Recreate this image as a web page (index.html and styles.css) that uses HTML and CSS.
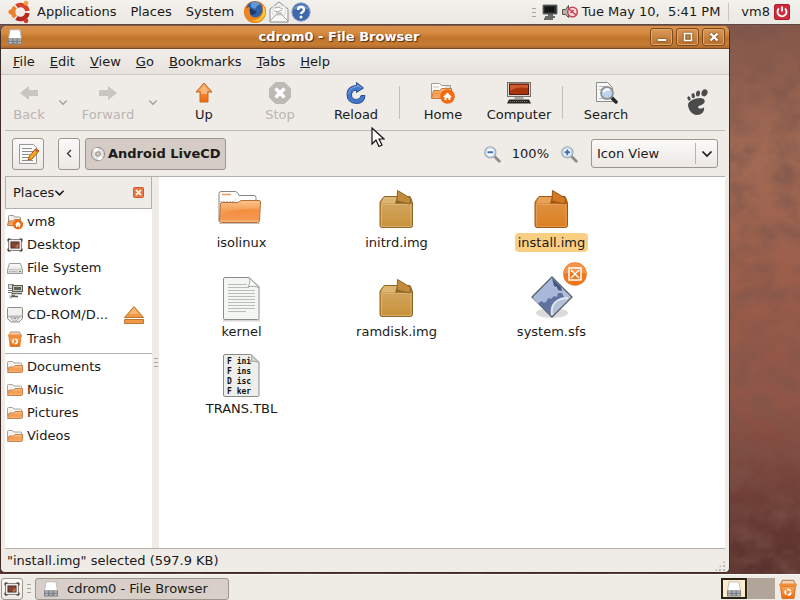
FILE: index.html
```html
<!DOCTYPE html>
<html lang="en">

<head>
    <meta charset="UTF-8">
    <meta name="viewport" content="width=device-width, initial-scale=1.0">
    <title>cdrom0 - File Browser</title>
    <link rel="stylesheet" href="styles.css">
</head>

<body>
    <!-- Shared icons -->
    <svg class="sprite" width="0" height="0" aria-hidden="true">
        <defs>
            <linearGradient id="orange" x1="0" y1="0" x2="0" y2="1">
                <stop offset="0" stop-color="#fcc48c" />
                <stop offset="0.5" stop-color="#f59a4e" />
                <stop offset="1" stop-color="#f9b070" />
            </linearGradient>
            <linearGradient id="hot" x1="0" y1="0" x2="0" y2="1">
                <stop offset="0" stop-color="#f9a45c" />
                <stop offset="1" stop-color="#ee6a0a" />
            </linearGradient>
            <linearGradient id="grey" x1="0" y1="0" x2="0" y2="1">
                <stop offset="0" stop-color="#fdfdfd" />
                <stop offset="1" stop-color="#d4d6d2" />
            </linearGradient>
            <linearGradient id="steel" x1="0" y1="0" x2="1" y2="1">
                <stop offset="0" stop-color="#93a5c8" />
                <stop offset="1" stop-color="#c3cde0" />
            </linearGradient>
            <linearGradient id="fade" x1="0" y1="0" x2="0" y2="1">
                <stop offset="0" stop-color="#fff" stop-opacity="0.15" />
                <stop offset="1" stop-color="#fff" stop-opacity="0" />
            </linearGradient>
        </defs>
        <symbol id="folder" viewBox="0 0 16 16">
            <path d="M.500 11.500v-8q0-1 1-1h4l1.500 1.500h6.500q1 0 1 1v2.500" fill="#f7f4f0" stroke="#a8a199" />
            <path d="M.500 13.500l1.500-5.500h4.500l1.500-1.500h7.500v6q0 1-1 1z" fill="url(#orange)" stroke="#c58552" />
        </symbol>
        <symbol id="home-folder" viewBox="0 0 16 16">
            <path d="M1.500 11.500v-9q0-1 1-1h4l1 1.500h5q1 0 1 1v2" fill="#f4f1ed" stroke="#99938b" />
            <path d="M.500 11.500l1-4.500h4l2-1.500h5.500v6z" fill="url(#orange)" stroke="#c67b41" />
            <circle cx="11" cy="10.500" r="5" fill="#ee6a14" />
            <path d="M11 7.500l3 3h-1v2.500h-1.500v-1.500h-1v1.500H9v-2.500H8z" fill="#fff" />
        </symbol>
        <symbol id="desktop" viewBox="0 0 16 16">
            <rect x="1.500" y="2.500" width="13" height="11" fill="#ece9e6" stroke="#8f8780" />
            <rect x="4" y="5" width="8" height="6" fill="#8c4330" stroke="#42302b" />
            <path d="M8 10.500l3.500-4v4z" fill="#bd7b5f" />
            <path d="M1 4.500V2h2.500M12.500 2H15v2.500M15 11.500V14h-2.500M3.500 14H1v-2.500" fill="none" stroke="#2d2623" />
        </symbol>
        <symbol id="drive" viewBox="0 0 16 16">
            <path d="M2.500 3.500h11l2 6v4H.500v-4z" fill="url(#grey)" stroke="#9c9e9a" />
            <path d="M1 9.500h14" stroke="#c6c6c4" />
            <path d="M2.500 11.500h8" stroke="#8f938d" stroke-dasharray="1 1" />
            <path d="M12 11.500h2" stroke="#6a9a3a" />
        </symbol>
        <symbol id="network" viewBox="0 0 16 16">
            <rect x="1.500" y="1.500" width="5" height="4" fill="#ddd" stroke="#8b8982" />
            <path d="M1 7.500h6M1 9.500h4v3h3" fill="none" stroke="#77756f" />
            <rect x="5.500" y="2.500" width="10" height="6" fill="#c9c6be" stroke="#5d5a55" />
            <path d="M7 4h7v3H7z" fill="#58654f" />
            <path d="M5 10.500h10M4 13.500h7" stroke="#5a5752" stroke-width="1.500" />
            <path d="M10 9v2M3 12v3h2" stroke="#aaa" fill="none" />
        </symbol>
        <symbol id="cdrom" viewBox="0 0 16 16">
            <path d="M1.500.500h13q1 0 1 1v10l-3.500 3.500H4L.500 11.500v-10q0-1 1-1z" fill="#f0f0ef" stroke="#8b8b88" />
            <path d="M1 8h14v3H1z" fill="#d3d4d2" />
            <path d="M2.500 9.500h11" stroke="#9c9d9b" stroke-dasharray="1 1" />
            <path d="M4 11h8l-2.500 3h-3z" fill="#eef4ec" stroke="#a8aba7" />
            <circle cx="8" cy="11.500" r="1" fill="#999" />
        </symbol>
        <symbol id="tray" viewBox="0 0 16 16">
            <path d="M3 .800h10l1.500 9H1.500z" fill="#fff" stroke="#b1b1b1" stroke-width=".800" />
            <path d="M1 9.500h14v6H1z" fill="#7c8186" />
            <path d="M2 11h3M6.500 11h3M11 11h3M2 13.800h3M11 13.800h3" stroke="#d4d7da" />
            <path d="M6.500 13.800h3" stroke="#b7bbc0" />
        </symbol>
        <symbol id="trash" viewBox="0 0 16 16">
            <path d="M2 4.500L3.500 1h9L14 4.500z" fill="#f8d2b0" stroke="#b98f70" />
            <path d="M2 6h12l-1.200 9.500H3.200z" fill="url(#hot)" stroke="#d86a18" stroke-width=".700" />
            <rect x="1" y="3.500" width="14" height="2.500" rx="1" fill="#f28b3c" />
            <circle cx="8" cy="10.500" r="2.200" fill="none" stroke="#fff" stroke-width="1.500" stroke-dasharray="3.600 1" />
        </symbol>
        <symbol id="box" viewBox="0 0 48 46">
            <path class="box-body" d="M11 9.500h26l2.500 6v23q0 2-2 2H9q-2 0-2-2V15z" />
            <path class="box-dark" d="M22 15.500l2-5h12l3 6H22z" />
            <path class="box-pale" d="M11 10h13l-2 6.500H8z" />
            <path d="M8.500 17.500H38v21q0 1-1 1H9.500q-1 0-1-1z" fill="url(#fade)" stroke="#fff" stroke-opacity=".25" />
            <path class="box-flap" d="M24.500 3.500L38 11.500l-1.500 5.500L24 14z" />
        </symbol>
        <symbol id="lens" viewBox="0 0 16 16">
            <path d="M10.500 10.500l4 4" stroke="#8c8c8a" stroke-width="2.500" stroke-linecap="round" />
            <circle cx="6.500" cy="6.500" r="5" fill="#e3ecf7" stroke="#9ca5af" />
            <circle cx="6.500" cy="6.500" r="3.900" fill="#fff" stroke="#b9cde6" />
        </symbol>
        <symbol id="down" viewBox="0 0 12 8">
            <path d="M1.500 1.500L6 6l4.500-4.500" fill="none" stroke="currentColor" stroke-width="1.700" />
        </symbol>
    </svg>

    <header class="panel top-panel">
        <nav class="panel-menus">
            <svg class="logo" viewBox="0 0 24 24" aria-hidden="true">
                <g fill="none" stroke-width="4.500">
                    <path d="M8.500 6.200A7 7 0 0 1 19.400 11" stroke="#d8402a" />
                    <path d="M19.400 13A7 7 0 0 1 8.500 17.800" stroke="#b5291f" />
                    <path d="M7.200 17A7 7 0 0 1 7.200 7" stroke="#f08330" />
                </g>
                <circle cx="2.800" cy="12" r="2.400" fill="#ef7f2d" />
                <circle cx="18" cy="3.200" r="2.400" fill="#f3a13f" />
                <circle cx="18" cy="20.800" r="2.400" fill="#d0382a" />
            </svg>
            <button class="panel-menu">Applications</button>
            <button class="panel-menu">Places</button>
            <button class="panel-menu">System</button>
        </nav>
        <div class="launchers">
            <button class="launcher" aria-label="Firefox">
                <svg width="24" height="24" viewBox="0 0 24 24">
                    <circle cx="12" cy="12" r="11" fill="#e8701a" />
                    <circle cx="11.500" cy="9.500" r="8" fill="#2d63ad" />
                    <path d="M8 3q5-3 9 1l-3 2-2 3-4-2z" fill="#5f9ad4" />
                    <path d="M2 6Q0 15 5 20q7 6 15-1 4-5 2-12-1 8-6 10-7 2-9-3l4-1 3-2-4-1q-3 0-4-3Q2 10 2 6z" fill="#ee861f" />
                    <path d="M20 5q5 9-1 14-5 4-10 2 9-1 11-9z" fill="#f9ce3c" />
                    <path d="M7 8l3 2 4 1-2 3-4 1q-2-3-1-7z" fill="#1b3668" />
                </svg>
            </button>
            <button class="launcher" aria-label="Mail">
                <svg width="20" height="22" viewBox="0 0 20 22">
                    <path d="M1 8l9-7 9 7v13H1z" fill="#f7f7f5" stroke="#8c8c8a" />
                    <path d="M4 5h12v9H4z" fill="#fff" stroke="#d8d8d5" />
                    <path d="M5 7q5-2 9 1M5 10q4 2 8-1M7 12h6" fill="none" stroke="#a9a9a5" />
                    <path d="M1 20l7-7h4l7 7" fill="none" stroke="#a5a5a2" />
                </svg>
            </button>
            <button class="launcher" aria-label="Help">
                <svg width="20" height="20" viewBox="0 0 20 20">
                    <circle cx="10" cy="10" r="9.200" fill="#3e68ac" stroke="#8fa8d0" />
                    <path d="M3 7q7-7 14 0" fill="none" stroke="#6f93cb" stroke-width="2" />
                    <path d="M7 8q0-3 3-3t3 2.500q0 1.500-1.500 2.500T10 12" fill="none" stroke="#fff" stroke-width="2.400" />
                    <circle cx="10" cy="15" r="1.500" fill="#fff" />
                </svg>
            </button>
        </div>
        <div class="tray">
            <span class="grip"></span>
            <svg width="16" height="16" viewBox="0 0 16 16" aria-hidden="true">
                <path d="M1 1h14v9H1z" fill="#282c2b" stroke="#777" />
                <path d="M3 3h9v5H3z" fill="#111614" />
                <path d="M3 13h10M6 11h5M2 15h9" stroke="#3d403f" stroke-width="1.500" />
            </svg>
            <svg class="sound" width="16" height="16" viewBox="0 0 16 16" aria-hidden="true">
                <path d="M.500 5.500h3l3-4v12l-3-3h-3z" fill="#b5b0ae" stroke="#57504d" />
                <circle cx="10.500" cy="8" r="4.800" fill="#f4dcdf" stroke="#c84355" stroke-width="1.500" />
                <path d="M7 5l7 6M8.500 9l3-3" stroke="#c84355" stroke-width="1.500" />
            </svg>
            <time class="clock">Tue May 10,  5:41 PM</time>
            <button class="user">vm8
                <svg width="16" height="16" viewBox="0 0 16 16" aria-hidden="true">
                    <rect x=".500" y=".500" width="15" height="15" rx="1.500" fill="#cf2b3d" stroke="#a91d2e" />
                    <path d="M5 4.500a4.500 4.500 0 1 0 6 0M8 2.500v5" fill="none" stroke="#fff" stroke-width="1.800" />
                </svg>
            </button>
        </div>
    </header>

    <main class="desktop">
        <svg class="wallpaper" aria-hidden="true">
            <filter id="grain" x="0" y="0" width="100%" height="100%">
                <feTurbulence type="fractalNoise" baseFrequency="0.040 0.050" numOctaves="6" seed="8" />
                <feColorMatrix values="0 0 0 0 0.200  0 0 0 0 0.090  0 0 0 0 0.070  1.300 0 0 0 -0.450" />
            </filter>
            <rect width="100%" height="100%" filter="url(#grain)" />
        </svg>

        <section class="window">
            <div class="titlebar">
                <svg width="16" height="16"><use href="#tray" /></svg>
                <h1>cdrom0 - File Browser</h1>
                <div class="window-buttons">
                    <button aria-label="Minimize"><svg viewBox="0 0 12 12"><path d="M2 9h8" stroke-width="2" /></svg></button>
                    <button aria-label="Maximize"><svg viewBox="0 0 12 12"><path d="M2.500 2.500h7v7h-7z" stroke-width="1.500" /></svg></button>
                    <button aria-label="Close"><svg viewBox="0 0 12 12"><path d="M2.500 2.500l7 7M9.500 2.500l-7 7" stroke-width="2.400" /></svg></button>
                </div>
            </div>

            <nav class="menubar">
                <button><u>F</u>ile</button>
                <button><u>E</u>dit</button>
                <button><u>V</u>iew</button>
                <button><u>G</u>o</button>
                <button><u>B</u>ookmarks</button>
                <button><u>T</u>abs</button>
                <button><u>H</u>elp</button>
            </nav>

            <div class="toolbar">
                <button class="tool back" disabled>
                    <svg width="24" height="24" viewBox="0 0 24 24"><path d="M3 12l9-7v4h9v6h-9v4z" fill="#c9c5c0" /></svg>
                    Back
                </button>
                <button class="history" aria-label="Back history" disabled><svg width="10" height="7"><use href="#down" /></svg></button>
                <button class="tool forward" disabled>
                    <svg width="24" height="24" viewBox="0 0 24 24"><path d="M21 12l-9-7v4H3v6h9v4z" fill="#c9c5c0" /></svg>
                    Forward
                </button>
                <button class="history" aria-label="Forward history" disabled><svg width="10" height="7"><use href="#down" /></svg></button>
                <button class="tool up">
                    <svg width="24" height="24" viewBox="0 0 24 24"><path d="M12 2l8 9h-4v10H8V11H4z" fill="url(#hot)" stroke="#c66a24" /><path d="M12 4l5 6h-2v3H9v-3H7z" fill="#fcc795" opacity=".700" /></svg>
                    Up
                </button>
                <button class="tool" disabled>
                    <svg width="24" height="24" viewBox="0 0 24 24"><path d="M7.500 1h9L23 7.500v9L16.500 23h-9L1 16.500v-9z" fill="#bdbab6" /><path d="M7.500 7.500l9 9M16.500 7.500l-9 9" stroke="#fff" stroke-width="3.500" /></svg>
                    Stop
                </button>
                <button class="tool">
                    <svg width="24" height="24" viewBox="0 0 24 24">
                        <path d="M12.500 1.500l7 5.500-7 4.500V9q-5 .500-5 5 0 4.500 5 4.500 4 0 4.500-4h4q-.500 8-8.500 8-9.500-.500-9.500-9Q3 5 12.500 4.500z" fill="#4478cc" stroke="#284c8c" />
                        <path d="M4.500 13q.500-7 9-7.500V4l3.500 3" fill="none" stroke="#7da6e6" />
                    </svg>
                    Reload
                </button>
                <span class="separator"></span>
                <button class="tool">
                    <svg width="24" height="24" viewBox="0 0 24 24">
                        <path d="M.500 17V2.500h8l2 2h9V9" fill="#fbfaf8" stroke="#a09b94" />
                        <path d="M2 6h6M14 6h5" stroke="#c9c4bd" />
                        <path d="M.500 17.500l2-8h6l2-2h10v10z" fill="url(#orange)" stroke="#c67b41" />
                        <circle cx="16.500" cy="15.500" r="7.300" fill="#f26d12" />
                        <path d="M16.500 11.500l4.500 4.500h-1.500v3h-2v-2h-2v2h-2v-3H12z" fill="#fff" />
                    </svg>
                    Home
                </button>
                <button class="tool">
                    <svg width="26" height="24" viewBox="0 0 26 24">
                        <rect x="1.500" y="1.500" width="23" height="14" fill="#ddd9d4" stroke="#77716b" />
                        <rect x="3.500" y="3" width="19" height="10.500" fill="#a8330f" stroke="#4e1c10" />
                        <path d="M4 10q6-5 18-3V4H4z" fill="#cc5a2b" />
                        <path d="M9 16h8l1 2H8z" fill="#a9a7a4" />
                        <path d="M3 18.500h20l2 4H1z" fill="#292726" />
                        <path d="M4 20.500h18" stroke="#77716b" stroke-dasharray="1 1" />
                    </svg>
                    Computer
                </button>
                <span class="separator"></span>
                <button class="tool">
                    <svg width="24" height="24" viewBox="0 0 24 24">
                        <path d="M2.500 1.500h11l5 5v14h-16z" fill="#f7f7f6" stroke="#8c8c8a" />
                        <path d="M5 5.500h7M5 8.500h4M5 17.500h8" stroke="#bbb" />
                        <path d="M17 16l5 5" stroke="#282828" stroke-width="3.500" stroke-linecap="round" />
                        <circle cx="13" cy="12" r="6" fill="#bdd5ee" stroke="#8f9499" stroke-width="1.800" />
                        <path d="M9.500 11q2-4 6-2" fill="none" stroke="#fff" stroke-width="2" />
                    </svg>
                    Search
                </button>
                <svg class="foot" viewBox="0 0 22 27" aria-hidden="true">
                    <ellipse cx="18.500" cy="3.800" rx="2.900" ry="3.600" transform="rotate(25 18.500 3.800)" />
                    <ellipse cx="12" cy="4.500" rx="2" ry="3" transform="rotate(8 12 4.500)" />
                    <ellipse cx="7.200" cy="6.700" rx="1.700" ry="2.600" transform="rotate(-8 7.200 6.700)" />
                    <ellipse cx="3" cy="9.500" rx="1.500" ry="2.200" transform="rotate(-22 3 9.500)" />
                    <path d="M14 9c5 0 6 4 3 6-2 2-4 1-5 3 0 2 5 2 6 0 1 5-3 8-7 8-6 0-9-7-9-10 0-4 7-7 12-7z" />
                </svg>
            </div>

            <div class="locationbar">
                <button class="push edit" aria-label="Edit location">
                    <svg width="24" height="24" viewBox="0 0 24 24">
                        <path d="M3.500 2.500h14l3 3v16h-17z" fill="#fafafa" stroke="#999995" />
                        <path d="M6 6.500h10M6 9.500h11M6 12.500h8M6 15.500h8M6 18.500h11" stroke="#8b8f8b" />
                        <path d="M12 18l1.500-4L20 6.500l3 2.500-7 8z" fill="#f5a623" stroke="#a55d14" />
                        <path d="M20 6.500l3 2.500-1.500 1.500-3-2.500z" fill="#d95b43" />
                    </svg>
                </button>
                <button class="push previous" aria-label="Previous folder">
                    <svg width="6" height="9" viewBox="0 0 6 9"><path d="M5 1L1.500 4.500 5 8" fill="none" stroke="#333" stroke-width="1.300" /></svg>
                </button>
                <button class="push crumb">
                    <svg width="16" height="16" viewBox="0 0 16 16" aria-hidden="true">
                        <circle cx="8" cy="8" r="6.500" fill="#e6e3e0" stroke="#8c8884" />
                        <path d="M8 8L3 4q3-3 5-2zM8 8l5 4q-3 3-5 2z" fill="#fff" />
                        <circle cx="8" cy="8" r="2.300" fill="#d4ccc7" stroke="#928c88" />
                    </svg>
                    Android LiveCD
                </button>
                <div class="zoom">
                    <button aria-label="Zoom out"><svg width="18" height="18" viewBox="0 0 16 16"><use href="#lens" /><path d="M4 6.500h5" stroke="#3f6fb5" stroke-width="1.800" /></svg></button>
                    <span>100%</span>
                    <button aria-label="Zoom in"><svg width="18" height="18" viewBox="0 0 16 16"><use href="#lens" /><path d="M4 6.500h5M6.500 4v5" stroke="#3f6fb5" stroke-width="1.800" /></svg></button>
                </div>
                <div class="view-select">
                    <select aria-label="View">
                        <option>Icon View</option>
                        <option>List View</option>
                        <option>Compact View</option>
                    </select>
                    <span class="view-arrow"><svg width="12" height="8"><use href="#down" /></svg></span>
                </div>
            </div>

            <div class="content">
                <aside class="sidebar">
                    <div class="sidebar-header">
                        <button class="sidebar-title">Places <svg width="11" height="8"><use href="#down" /></svg></button>
                        <button class="sidebar-close" aria-label="Close side pane">
                            <svg width="11" height="11" viewBox="0 0 11 11"><rect x=".500" y=".500" width="10" height="10" rx="1" fill="#ea7a45" stroke="#d05a28" /><path d="M3 3l5 5M8 3L3 8" stroke="#fff" stroke-width="1.700" /></svg>
                        </button>
                    </div>
                    <ul class="places">
                        <li><a href="#"><svg><use href="#home-folder" /></svg>vm8</a></li>
                        <li><a href="#"><svg><use href="#desktop" /></svg>Desktop</a></li>
                        <li><a href="#"><svg><use href="#drive" /></svg>File System</a></li>
                        <li><a href="#"><svg><use href="#network" /></svg>Network</a></li>
                        <li class="removable">
                            <a href="#"><svg><use href="#cdrom" /></svg>CD-ROM/D...</a>
                            <button class="eject" aria-label="Eject">
                                <svg width="22" height="20" viewBox="0 0 22 20"><path d="M11 1.500l9.500 11h-19zM1.500 14.500h19v4h-19z" fill="#f19a44" stroke="#bd7532" /><path d="M11 3l5 6H6z" fill="#f8b878" /></svg>
                            </button>
                        </li>
                        <li><a href="#"><svg><use href="#trash" /></svg>Trash</a></li>
                    </ul>
                    <ul class="places bookmarks">
                        <li><a href="#"><svg><use href="#folder" /></svg>Documents</a></li>
                        <li><a href="#"><svg><use href="#folder" /></svg>Music</a></li>
                        <li><a href="#"><svg><use href="#folder" /></svg>Pictures</a></li>
                        <li><a href="#"><svg><use href="#folder" /></svg>Videos</a></li>
                    </ul>
                </aside>
                <div class="splitter"><span class="grip"></span></div>
                <div class="files">
                    <a class="file" href="#">
                        <svg viewBox="0 0 48 46">
                            <path d="M1 34.500V6.500q0-2 2-2h14q2 0 3 2l1 2h15q2 0 2 2v7" fill="#fff" stroke="#8d867e" />
                            <path d="M4 7.500h9" stroke="#ee9a5a" stroke-width="1.500" />
                            <path d="M2 14.500h14l2-2" fill="none" stroke="#c5bfb8" stroke-dasharray="2 1" />
                            <path d="M2.500 17q0-1.500 1.500-1.500h15q2 0 4-2h18q1.500 0 1.500 1.500l-1 18.500q0 2-2 2h-36q-2 0-2-2z" fill="url(#orange)" stroke="#b5703c" />
                            <path d="M2.500 28q17-8 39-6l-.500 11H2z" fill="#f08238" opacity=".450" />
                            <path d="M1 36.500h41" stroke="#8f8780" opacity=".500" />
                        </svg>
                        <span>isolinux</span>
                    </a>
                    <a class="file" href="#">
                        <svg><use href="#box" /></svg>
                        <span>initrd.img</span>
                    </a>
                    <a class="file selected" href="#">
                        <svg><use href="#box" /></svg>
                        <span>install.img</span>
                    </a>
                    <a class="file" href="#">
                        <svg viewBox="0 0 48 46">
                            <path d="M5 44.500h37" stroke="#bbb" stroke-width="2" opacity=".600" />
                            <path d="M5.500 3q0-1.500 1.500-1.500h24l10 9V42q0 1.500-1.500 1.500H7q-1.500 0-1.500-1.500z" fill="#f4f6f4" stroke="#8a8c8a" />
                            <path d="M10 8.500h19M10 11.500h21M10 14.500h27M10 17.500h27M10 20.500h27M10 23.500h27M10 26.500h27M10 29.500h27M10 32.500h27M10 35.500h18" stroke="#b7beba" />
                            <path d="M31 1.500q2 6-1 9 6-1 11 1z" fill="#fff" stroke="#a5a8a5" />
                        </svg>
                        <span>kernel</span>
                    </a>
                    <a class="file" href="#">
                        <svg><use href="#box" /></svg>
                        <span>ramdisk.img</span>
                    </a>
                    <a class="file with-emblem" href="#">
                        <svg viewBox="0 0 48 46">
                            <ellipse cx="24" cy="37" rx="16" ry="5" fill="#999" opacity=".350" />
                            <path d="M24 1l20 20-20 20L4 21z" fill="url(#steel)" stroke="#59616f" stroke-width="1.300" />
                            <path d="M24 2l11 11-1 3-3 0 0 3-3-1-1 4-4-1-1 4-4-1-2 4-4-1-2 1-5-6z" fill="#a8b8d8" />
                            <path d="M24 2l9 9 1 4-4-1-1-3-3-1z" fill="#46577f" />
                            <path d="M10 27l4-2 2 2 3-2 1-3 3 1 3-3 3 1 1-4 4 0 2 4-4 1-2 4-4 1-2 5-1 7z" fill="#60739f" />
                            <path d="M24 39q-2-12 9-16l7-1" fill="none" stroke="#e0e6f2" stroke-width="2" />
                        </svg>
                        <svg class="emblem" viewBox="0 0 24 24">
                            <circle cx="12" cy="12" r="11.800" fill="#f1771c" />
                            <path d="M1 12a11 11 0 0 1 22 0q-11-4-22 0z" fill="#f6a260" opacity=".700" />
                            <path d="M6 6h12v12H6zM8 8l8 8M16 8l-8 8" fill="none" stroke="#fff" stroke-width="1.500" />
                        </svg>
                        <span>system.sfs</span>
                    </a>
                    <a class="file" href="#">
                        <svg viewBox="0 0 48 46">
                            <path d="M5.500 3q0-1.500 1.500-1.500h26l8 8V42q0 1.500-1.500 1.500H7q-1.500 0-1.500-1.500z" fill="#eeefec" stroke="#8a8c8a" />
                            <path d="M33 1.500q2 5-1 7 5-1 9 1z" fill="#cfd5cd" stroke="#a5a8a5" />
                            <g class="preview">
                                <text x="9" y="11">F ini</text>
                                <text x="9" y="21">F ins</text>
                                <text x="9" y="31">D isc</text>
                                <text x="9" y="41">F ker</text>
                            </g>
                        </svg>
                        <span>TRANS.TBL</span>
                    </a>
                </div>
            </div>

            <footer class="statusbar">
                <span>"install.img" selected (597.9 KB)</span>
                <span class="resize"></span>
            </footer>
        </section>

        <svg class="pointer" viewBox="0 0 14 21" aria-hidden="true">
            <path d="M1 1v16l4-4 3 6.500 3-1.500-3-6h5z" fill="#fff" stroke="#111" stroke-width="1.200" />
        </svg>
    </main>

    <footer class="panel bottom-panel">
        <button class="push show-desktop" aria-label="Show desktop"><svg width="16" height="16"><use href="#desktop" /></svg></button>
        <span class="grip"></span>
        <button class="push task"><svg width="16" height="16"><use href="#tray" /></svg>cdrom0 - File Browser</button>
        <div class="workspaces">
            <button class="workspace current" aria-label="Workspace 1"><svg width="16" height="16"><use href="#tray" /></svg></button>
            <button class="workspace" aria-label="Workspace 2"></button>
        </div>
        <button class="trash" aria-label="Trash"><svg width="20" height="22"><use href="#trash" /></svg></button>
    </footer>
</body>

</html>
```
FILE: styles.css
```css
* {
    box-sizing: border-box;
}

body {
    margin: 0;
    height: 100vh;
    display: flex;
    flex-direction: column;
    font-family: "DejaVu Sans", sans-serif;
    font-size: 13px;
    line-height: 18px;
    color: #1a1a1a;
    background-color: #6e3c30;
    overflow: hidden;
}

button {
    font: inherit;
    color: inherit;
    background: none;
    border: none;
    padding: 0;
    white-space: nowrap;
}

button,
a,
select {
    cursor: default;
}

svg {
    display: block;
    flex-shrink: 0;
}

.sprite {
    position: absolute;
}

/* Panels */
.panel {
    display: flex;
    align-items: center;
    flex-shrink: 0;
    background-color: #efebe5;
}

.top-panel {
    height: 24px;
    padding: 0 10px 0 8px;
    background: linear-gradient(#f4f2ee, #ebe7e1);
}

.panel-menus {
    display: flex;
    align-items: center;
    gap: 14px;
}

.logo {
    width: 24px;
    height: 24px;
    margin-right: -9px;
}

.launchers {
    display: flex;
    align-items: center;
    gap: 2px;
    margin-left: 9px;
}

.tray {
    display: flex;
    align-items: center;
    margin-left: auto;
}

.grip {
    width: 4px;
    height: 9px;
    background: repeating-linear-gradient(#a9a49d 0 1px, transparent 1px 4px);
}

.tray .grip {
    margin-right: 6px;
}

.sound {
    margin-left: 4px;
}

.clock {
    margin-left: 4px;
    padding-right: 8px;
    white-space: pre;
    border-right: 1px solid #c9c4bd;
}

.user {
    display: flex;
    align-items: center;
    gap: 4px;
    margin-left: 12px;
}

/* Desktop */
.desktop {
    flex: 1;
    min-height: 0;
    display: flex;
    position: relative;
    padding: 1px 70px 1px 0;
    background: linear-gradient(#84574a, #a26a54 24%, #9b5e4a 45%, #8f5446 70%, #6b3c35 88%, #58302c);
    border-top: 1px solid #5c4a42;
}

.wallpaper {
    position: absolute;
    inset: 0;
    width: 100%;
    height: 100%;
}

.pointer {
    position: absolute;
    left: 371px;
    top: 102px;
    width: 14px;
    height: 21px;
}

/* Window */
.window {
    position: relative;
    flex: 1;
    min-width: 0;
    display: flex;
    flex-direction: column;
    background-color: #efebe7;
    border: 1px solid #3d2c25;
    border-top: none;
    border-radius: 6px 6px 5px 5px;
    overflow: hidden;
}

.titlebar {
    display: flex;
    align-items: center;
    height: 23px;
    padding: 0 4px 0 6px;
    background: linear-gradient(#d8924c, #d68b42 30%, #c0742c 55%, #c77b33 85%, #a9682f);
    border-bottom: 1px solid #7d4b1f;
}

.titlebar h1 {
    flex: 1;
    margin: 0;
    padding-left: 5px;
    text-align: center;
    font-size: 13px;
    font-weight: bold;
    color: #fff;
    text-shadow: 1px 1px 1px #4b2b10;
}

.window-buttons {
    display: flex;
    gap: 3px;
}

.window-buttons button {
    display: flex;
    align-items: center;
    justify-content: center;
    width: 23px;
    height: 18px;
    border: 1px solid #7f4a1a;
    border-radius: 3px;
    background: linear-gradient(#dc9a5b, #b9702b);
    box-shadow: inset 0 0 0 1px #e0a66c;
}

.window-buttons svg {
    width: 12px;
    height: 12px;
    fill: none;
    stroke: #fff;
    filter: drop-shadow(0 0 1px #4b2b10);
}

.menubar {
    display: flex;
    gap: 15px;
    padding: 4px 12px 3px;
    background: linear-gradient(#f1eeea, #e7e2dc);
    border-bottom: 1px solid #cbc6bf;
}

/* Toolbar */
.toolbar {
    display: flex;
    align-items: center;
    height: 56px;
    margin: 0 4px;
    border-bottom: 1px solid #bdb8b1;
}

.tool {
    display: flex;
    flex-direction: column;
    align-items: center;
    gap: 1px;
    width: 76px;
}

.tool.back {
    width: 48px;
}

.tool.forward {
    width: 70px;
}

.tool.up {
    margin-left: 3px;
}

.tool:disabled {
    color: #b9b5b0;
}

.history {
    display: flex;
    justify-content: center;
    width: 20px;
    color: #a5a19c;
}

.separator {
    width: 1px;
    height: 33px;
    margin: 0 5px;
    background-color: #c4bfb8;
}

.foot {
    width: 22px;
    height: 27px;
    margin-left: auto;
    margin-right: 17px;
    fill: #4b4b4b;
}

.locationbar {
    display: flex;
    align-items: center;
    height: 46px;
    padding: 0 7px;
    margin: 0 4px;
    border-bottom: 1px solid #b5b0a9;
}

.push {
    display: flex;
    align-items: center;
    justify-content: center;
    height: 32px;
    border: 1px solid #9c968f;
    border-radius: 3px;
    background: linear-gradient(#fbfaf9, #ece8e4);
}

.edit {
    width: 32px;
}

.previous {
    width: 22px;
    margin: 0 5px 0 14px;
}

.crumb {
    gap: 2px;
    padding: 0 4px;
    font-weight: bold;
    background: #d5ccc6;
}

.zoom {
    display: flex;
    align-items: center;
    gap: 11px;
    margin-left: auto;
}

.view-select {
    position: relative;
    width: 127px;
    margin-left: 13px;
}

.view-select select {
    display: block;
    width: 100%;
    height: 29px;
    padding: 0 30px 0 5px;
    appearance: none;
    font: inherit;
    color: inherit;
    border: 1px solid #9c968f;
    border-radius: 3px;
    background: linear-gradient(#fbfaf9, #ece8e4);
}

.view-arrow {
    position: absolute;
    right: 1px;
    top: 4px;
    bottom: 4px;
    width: 22px;
    display: flex;
    align-items: center;
    justify-content: center;
    border-left: 1px solid #b9b4ad;
    pointer-events: none;
}

/* Content */
.content {
    flex: 1;
    min-height: 0;
    display: flex;
    margin: 0 4px;
    border-bottom: 1px solid #b5b0a9;
}

.sidebar {
    width: 147px;
    background-color: #fff;
}

.sidebar-header {
    display: flex;
    align-items: center;
    justify-content: space-between;
    height: 32px;
    padding: 0 7px;
    background-color: #efebe7;
    border: 1px solid #b5b0a9;
    border-top: none;
}

.sidebar-title {
    display: flex;
    align-items: center;
}

.places {
    margin: 0;
    padding: 1px 0 3px 2px;
    list-style: none;
}

.places li {
    display: flex;
    align-items: center;
    justify-content: space-between;
    height: 23px;
}

.places .removable {
    height: 25px;
    padding-right: 7px;
}

.places a {
    display: flex;
    align-items: center;
    gap: 4px;
    color: inherit;
    text-decoration: none;
}

.places a svg {
    width: 16px;
    height: 16px;
}

.bookmarks {
    border-top: 1px solid #b5b0a9;
}

.splitter {
    display: flex;
    align-items: center;
    justify-content: center;
    width: 7px;
}

.files {
    flex: 1;
    display: grid;
    grid-template-columns: repeat(auto-fill, 155px);
    align-content: start;
    align-items: end;
    row-gap: 12px;
    padding: 10px 5px;
    background-color: #fff;
}

.file {
    position: relative;
    display: flex;
    flex-direction: column;
    align-items: center;
    color: inherit;
    text-decoration: none;
}

.file svg {
    width: 48px;
    height: 46px;
}

.file span {
    padding: 0 3px;
    line-height: 19px;
    border-radius: 4px;
}

.file.selected span {
    background-color: #f9cf83;
}

.with-emblem {
    padding-top: 12px;
}

.file .emblem {
    position: absolute;
    top: -2px;
    left: 50%;
    width: 24px;
    height: 24px;
    margin-left: 11px;
}

.box-body {
    fill: #c9933d;
    stroke: #8f6524;
}

.box-pale {
    fill: #dcb673;
}

.box-dark {
    fill: #8f6526;
}

.box-flap {
    fill: #c08c3c;
    stroke: #8f6524;
}

/* Selected icons are tinted orange */
.selected svg {
    --body: #cb7a1d;
}

.selected svg {
    filter: saturate(1.4) hue-rotate(-9deg) brightness(0.92);
}

.preview {
    font-family: "DejaVu Sans Mono", monospace;
    font-size: 8px;
    font-weight: bold;
    fill: #111;
}

.statusbar {
    display: flex;
    align-items: center;
    justify-content: space-between;
    height: 23px;
    padding: 0 3px 0 6px;
}

.resize {
    align-self: flex-end;
    width: 12px;
    height: 12px;
    background: radial-gradient(circle, #bbb6af 1px, transparent 1px) 0 0 / 4px 4px;
    clip-path: polygon(100% 0, 100% 100%, 0 100%);
}

/* Bottom panel */
.bottom-panel {
    height: 26px;
    padding: 2px 2px 0 1px;
    border-top: 1px solid #faf9f7;
}

.bottom-panel .push {
    height: 22px;
}

.show-desktop {
    width: 22px;
}

.bottom-panel .grip {
    margin: 0 4px;
}

.task {
    justify-content: flex-start;
    gap: 8px;
    width: 194px;
    padding: 0 7px;
    background: #d8cfc9;
}

.workspaces {
    display: flex;
    gap: 1px;
    margin-left: auto;
    background-color: #dcb485;
}

.workspace {
    display: flex;
    align-items: center;
    justify-content: center;
    width: 27px;
    height: 21px;
    background-color: #b0a598;
}

.workspace.current {
    width: 26px;
    background-color: #fbeccb;
    border: 2px solid #2b2415;
}

.trash {
    margin-left: 3px;
}
```
